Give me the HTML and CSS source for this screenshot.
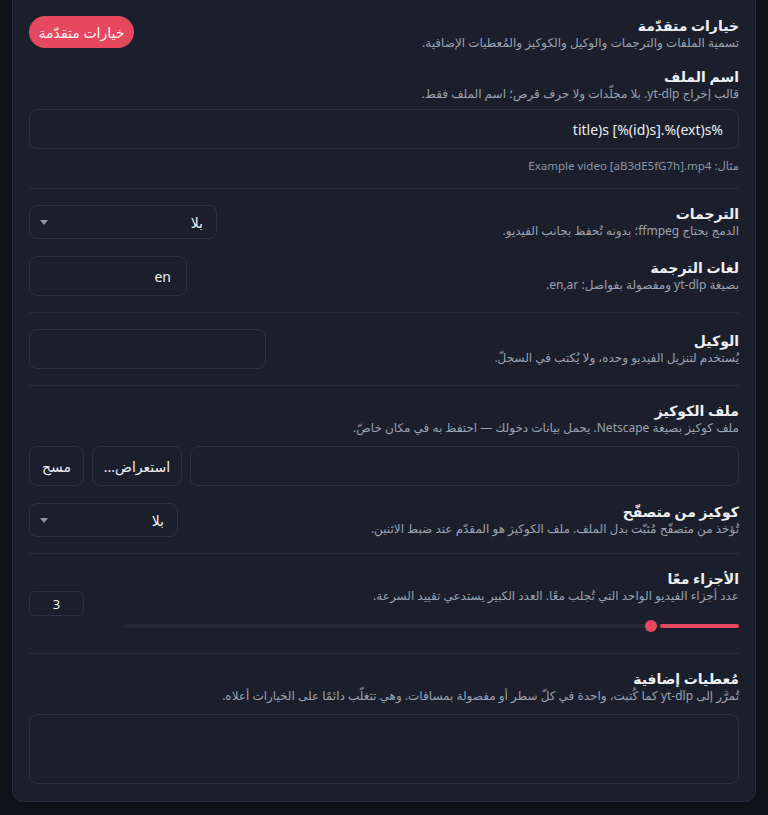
FILE: index.html
```html
<!DOCTYPE html>
<html lang="ar" dir="rtl">
<head>
<meta charset="utf-8">
<title>خيارات متقدّمة</title>
<link rel="stylesheet" href="styles.css">
</head>
<body>
<div class="wrap">
  <div class="panel">
    <div class="row head">
      <div class="text">
        <div class="title">خيارات متقدّمة</div>
        <div class="desc">تسمية الملفات والترجمات والوكيل والكوكيز والمُعطيات الإضافية.</div>
      </div>
      <button class="pill">خيارات متقدّمة</button>
    </div>

    <div class="section">
      <div class="text">
        <div class="title">اسم الملف</div>
        <div class="desc">قالب إخراج yt-dlp. بلا مجلّدات ولا حرف قرص؛ اسم الملف فقط.</div>
      </div>
      <div class="field full"><span class="ltr">title)s [%(id)s].%(ext)s%</span></div>
      <div class="hint">مثال: Example video [aB3dE5fG7h].mp4</div>
    </div>

    <div class="divider tight"></div>

    <div class="section rows">
      <div class="row">
        <div class="text">
          <div class="title">الترجمات</div>
          <div class="desc">الدمج يحتاج ffmpeg؛ بدونه تُحفظ بجانب الفيديو.</div>
        </div>
        <div class="select w-sub"><span>بلا</span><svg class="caret" width="8" height="5" viewBox="0 0 8 5"><path d="M0 0h8L4 5z"/></svg></div>
      </div>
      <div class="row">
        <div class="text">
          <div class="title">لغات الترجمة</div>
          <div class="desc">بصيغة yt-dlp ومفصولة بفواصل: en,ar.</div>
        </div>
        <div class="field w-lang">en</div>
      </div>
    </div>

    <div class="divider"></div>

    <div class="section">
      <div class="row">
        <div class="text">
          <div class="title">الوكيل</div>
          <div class="desc">يُستخدم لتنزيل الفيديو وحده، ولا يُكتب في السجلّ.</div>
        </div>
        <div class="field w-proxy"></div>
      </div>
    </div>

    <div class="divider"></div>

    <div class="section rows">
      <div class="cookies">
        <div class="text">
          <div class="title">ملف الكوكيز</div>
          <div class="desc">ملف كوكيز بصيغة Netscape. يحمل بيانات دخولك — احتفظ به في مكان خاصّ.</div>
        </div>
        <div class="filerow">
          <div class="field grow"></div>
          <button class="btn w-browse">استعراض...</button>
          <button class="btn w-clear">مسح</button>
        </div>
      </div>
      <div class="row">
        <div class="text">
          <div class="title">كوكيز من متصفّح</div>
          <div class="desc">تُؤخذ من متصفّح مُثبّت بدل الملف. ملف الكوكيز هو المقدّم عند ضبط الاثنين.</div>
        </div>
        <div class="select w-browser"><span>بلا</span><svg class="caret" width="8" height="5" viewBox="0 0 8 5"><path d="M0 0h8L4 5z"/></svg></div>
      </div>
    </div>

    <div class="divider"></div>

    <div class="section frag">
      <div class="text">
        <div class="title">الأجزاء معًا</div>
        <div class="desc">عدد أجزاء الفيديو الواحد التي تُجلب معًا. العدد الكبير يستدعي تقييد السرعة.</div>
      </div>
      <div class="num">3</div>
      <div class="slider">
        <div class="track">
          <div class="fill" style="width: 79px"></div>
          <div class="thumb"></div>
        </div>
      </div>
    </div>

    <div class="divider"></div>

    <div class="section">
      <div class="text">
        <div class="title">مُعطيات إضافية</div>
        <div class="desc">تُمرَّر إلى yt-dlp كما كُتبت، واحدة في كلّ سطر أو مفصولة بمسافات. وهي تتغلّب دائمًا على الخيارات أعلاه.</div>
      </div>
      <div class="area"></div>
    </div>
  </div>
</div>
</body>
</html>
```

FILE: styles.css
```css
* { box-sizing: border-box; }

html, body {
  margin: 0;
  padding: 0;
  background: #0e1118;
}

body {
  font-family: "Segoe UI", "Noto Sans", "DejaVu Sans", sans-serif;
  color: #e6e9ef;
  direction: rtl;
}

.wrap {
  padding: 0 12px 12px;
}

.panel {
  background: #1a1f2b;
  border: 1px solid #272d3b;
  border-top: none;
  border-radius: 0 0 12px 12px;
  padding: 17px 16px 17px;
}

.row {
  display: flex;
  align-items: center;
  justify-content: space-between;
  gap: 16px;
}

.head {
  align-items: flex-start;
  margin-bottom: 17px;
}

.head .pill {
  margin-top: -1px;
}

.title {
  font-size: 14px;
  font-weight: 700;
  line-height: 17px;
  color: #eef0f4;
}

.desc {
  font-size: 12px;
  line-height: 17px;
  color: #9aa2b1;
}

.pill {
  background: #e5485f;
  color: #fff1f3;
  border: none;
  border-radius: 16px;
  height: 32px;
  width: 105px;
  font: inherit;
  font-size: 14px;
  padding: 0;
}

.section {
  display: flex;
  flex-direction: column;
}

.rows {
  gap: 17px;
}

.field, .select, .btn, .num, .area {
  background: #1a1f2b;
  border: 1px solid #2a3040;
  border-radius: 8px;
  color: #eef0f4;
  font-size: 14px;
}

.field {
  height: 40px;
  display: flex;
  align-items: center;
  padding: 0 15px;
  white-space: nowrap;
}

.ltr {
  direction: ltr;
  unicode-bidi: isolate;
}

.full {
  margin-top: 7px;
  width: 100%;
}

.hint {
  margin-top: 9px;
  font-size: 11.5px;
  line-height: 16px;
  color: #8d95a4;
}

.divider {
  height: 1px;
  background: #252b39;
  margin: 16px 0 16px;
}

.divider.tight {
  margin-top: 14px;
}

.select {
  height: 34px;
  display: flex;
  align-items: center;
  justify-content: space-between;
  padding: 0 13px 0 10px;
}

.caret { fill: #8d95a4; }

.w-sub { width: 188px; }
.w-lang { width: 158px; }
.w-proxy { width: 237px; }
.w-browser { width: 149px; }

.cookies {
  display: flex;
  flex-direction: column;
  gap: 10px;
}

.filerow {
  display: flex;
  gap: 8px;
}

.grow { flex: 1; }

.btn {
  height: 40px;
  font: inherit;
  font-size: 14px;
  color: #eef0f4;
  padding: 0;
}

.w-browse { width: 90px; }
.w-clear { width: 55px; }

.frag {
  display: grid;
  grid-template-columns: 1fr 55px;
  column-gap: 39px;
}

.frag .text { grid-column: 1; grid-row: 1; }

.num {
  grid-column: 2;
  grid-row: 1 / span 2;
  align-self: center;
  height: 25px;
  border-radius: 6px;
  display: flex;
  align-items: center;
  justify-content: center;
  font-size: 13px;
}

.slider {
  grid-column: 1;
  grid-row: 2;
  height: 22px;
  margin-top: 11px;
  display: flex;
  align-items: center;
}

.track {
  position: relative;
  width: 100%;
  height: 4px;
  border-radius: 2px;
  background: #232937;
}

.fill {
  position: absolute;
  right: 0;
  top: 0;
  height: 4px;
  border-radius: 2px;
  background: #e5485f;
}

.thumb {
  position: absolute;
  right: 82px;
  top: -4px;
  width: 12px;
  height: 12px;
  border-radius: 50%;
  background: #e5485f;
}

.area {
  margin-top: 10px;
  height: 70px;
  width: 100%;
}
```
